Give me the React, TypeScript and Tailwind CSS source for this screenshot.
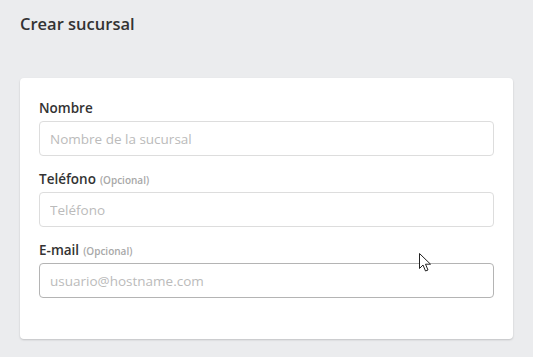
import React from 'react';

const Field: React.FC<{ label: string; optional?: boolean; placeholder: string; active?: boolean }> = ({
  label,
  optional,
  placeholder,
  active,
}) => (
  <div className="mb-[13px]">
    <label className="flex items-baseline h-[20px] mb-[3px] text-[13.5px] font-semibold text-[#333]">
      {label}
      {optional && <span className="ml-1 text-[10px] font-semibold text-[#a8a8a8]">(Opcional)</span>}
    </label>
    <input
      className={`block w-full h-[35px] px-[10px] rounded-[4px] border bg-white text-[13.5px] outline-none placeholder:text-[#bbbbbb] ${
        active ? 'border-[#b4b4b4]' : 'border-[#dddddd]'
      }`}
      placeholder={placeholder}
    />
  </div>
);

export default function App() {
  return (
    <div
      className="relative w-[533px] h-[357px] bg-[#ebecee] overflow-hidden px-5"
      style={{ fontFamily: '"Open Sans", "Noto Sans", sans-serif' }}
    >
      <h1 className="pt-[12px] h-[78px] text-[16.5px] font-semibold text-[#333]">Crear sucursal</h1>

      <div className="bg-white rounded-[4px] shadow-[0_1px_2px_rgba(0,0,0,0.18)] pt-[20px] pb-[28px] px-[19px]">
        <Field label="Nombre" placeholder="Nombre de la sucursal" />
        <Field label="Teléfono" optional placeholder="Teléfono" />
        <Field label="E-mail" optional placeholder="usuario@hostname.com" active />
      </div>

      <svg className="absolute left-[419px] top-[253px]" width="13" height="20" viewBox="0 0 13 20">
        <path
          d="M0.5 0.5 L0.5 15.5 L4 12 L6.5 18 L9 17 L6.5 11.2 L11.5 11.2 Z"
          fill="white"
          stroke="#222"
          strokeWidth="1"
          strokeLinejoin="round"
        />
      </svg>
    </div>
  );
}
